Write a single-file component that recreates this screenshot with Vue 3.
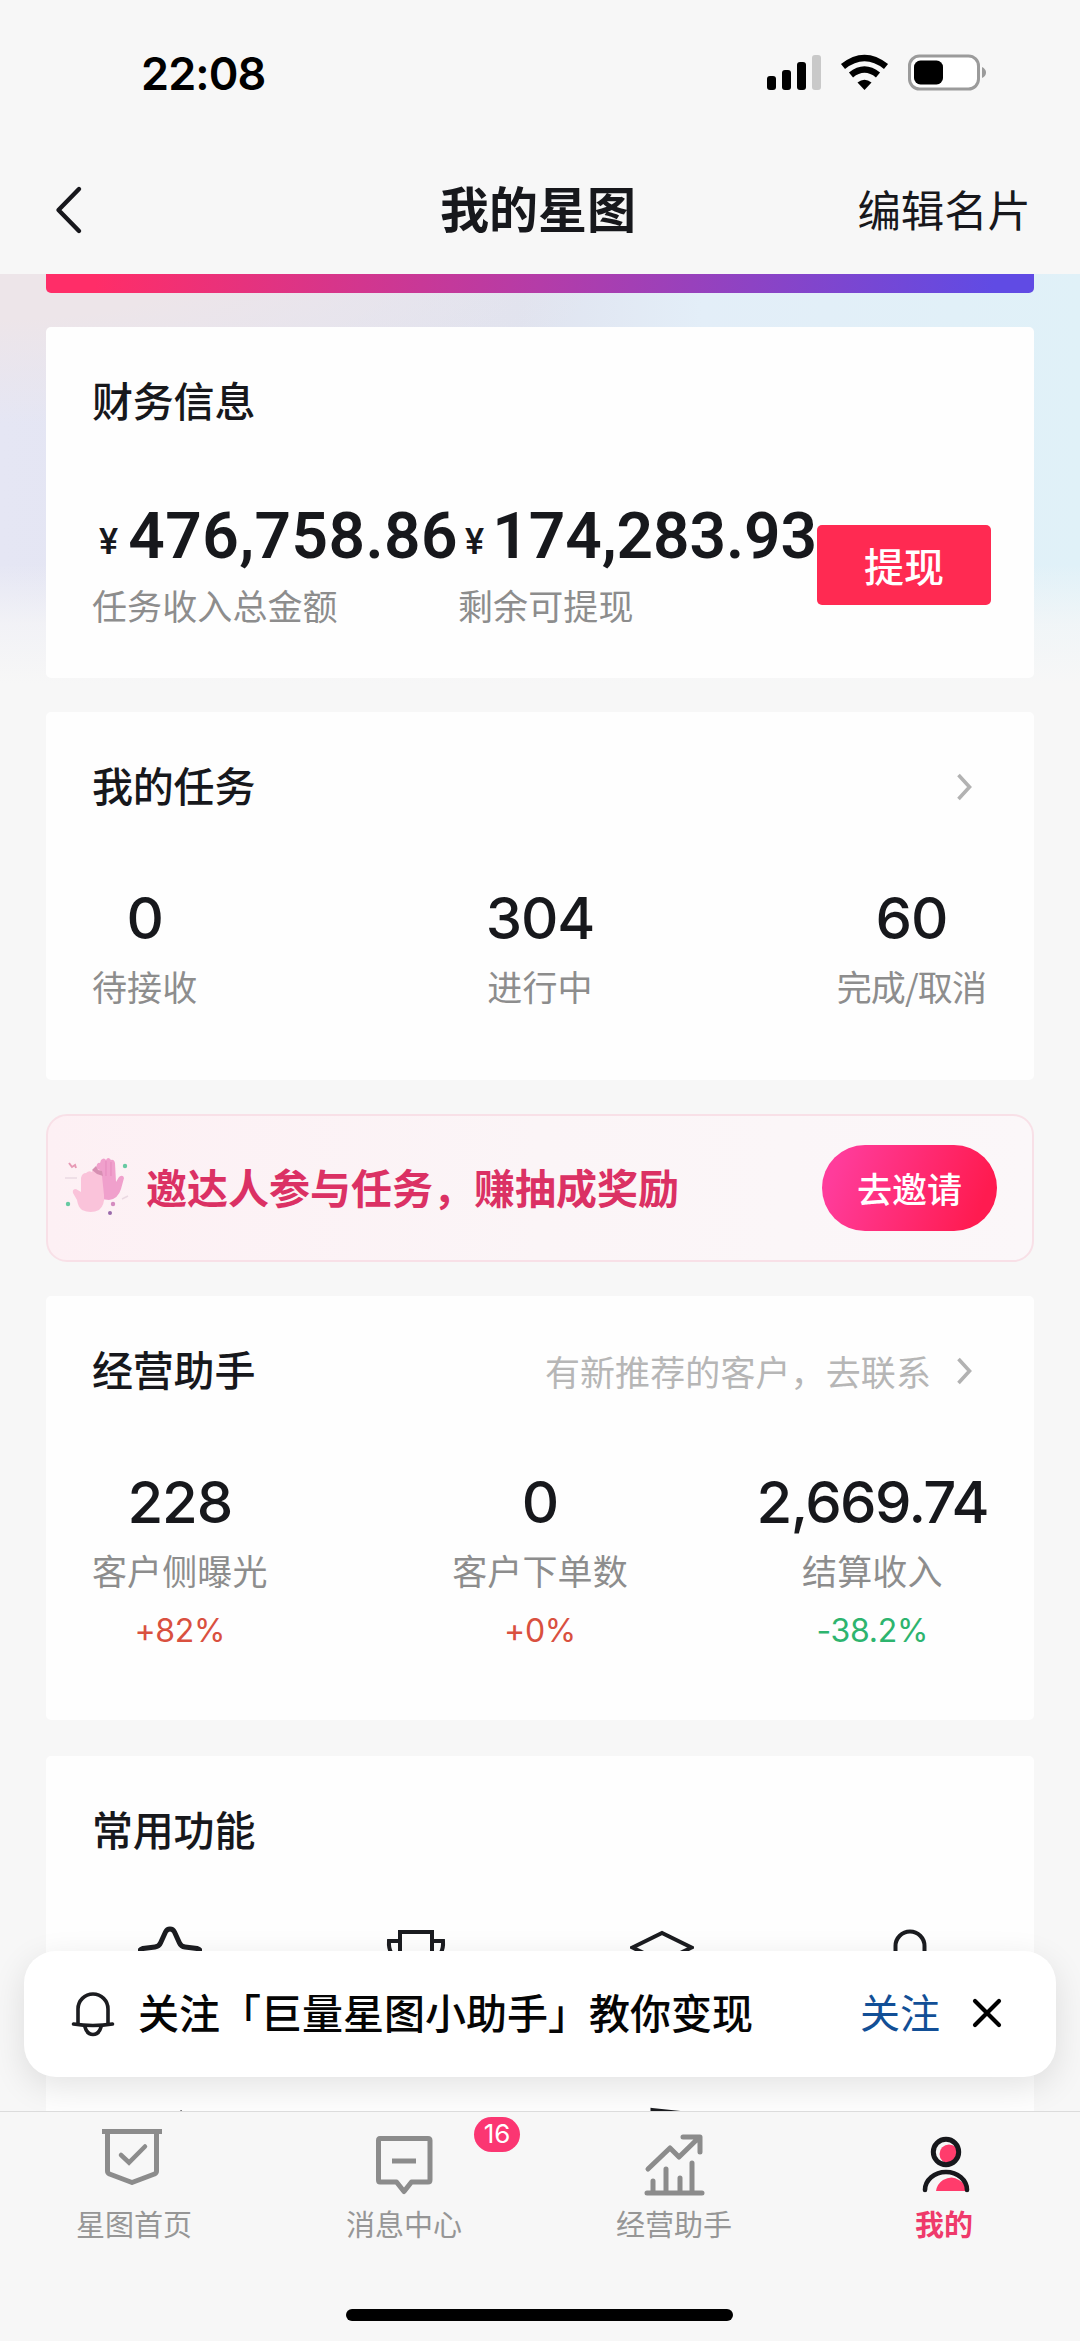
<script setup>
const tasks = [
  { value: '0', label: '待接收' },
  { value: '304', label: '进行中' },
  { value: '60', label: '完成/取消' },
]
const business = [
  { value: '228', label: '客户侧曝光', delta: '+82%', trend: 'rise' },
  { value: '0', label: '客户下单数', delta: '+0%', trend: 'rise' },
  { value: '2,669.74', label: '结算收入', delta: '-38.2%', trend: 'fall' },
]
</script>

<template>
  <div class="page">
    <header class="top">
      <div class="status">
        <span class="time">22:08</span>
        <svg class="status-icons" width="222" height="40" viewBox="0 0 222 40">
          <rect x="0" y="22" width="9" height="14" rx="3" />
          <rect x="15" y="16" width="9" height="20" rx="3" />
          <rect x="30" y="8" width="9" height="28" rx="3" />
          <rect x="45" y="1" width="9" height="35" rx="3" fill="#c9c9c9" />
          <path d="M76 12.500Q97.500 -4.500 119 12.500" fill="none" stroke="#000" stroke-width="6.500" />
          <path d="M84 21Q97.500 10 111 21" fill="none" stroke="#000" stroke-width="6.500" />
          <path d="M90.500 28.500Q97.500 23 104.500 28.500L97.500 36Z" />
          <rect x="142.500" y="2" width="69" height="33" rx="10" fill="#fff" stroke="#9b9b9b" stroke-width="3" />
          <rect x="147" y="6.500" width="29" height="24" rx="6.500" />
          <path d="M215 13Q219 15 219 18.500Q219 22 215 24Z" fill="#9b9b9b" />
        </svg>
      </div>
      <nav class="navbar">
        <svg class="back" width="30" height="50" viewBox="0 0 30 50">
          <path d="M25 4L4.500 25L25 46" fill="none" stroke="#17171c" stroke-width="4.400" stroke-linecap="round" stroke-linejoin="round" />
        </svg>
        <h1>我的星图</h1>
        <span class="edit">编辑名片</span>
      </nav>
    </header>

    <main class="content">
      <div class="strip"></div>

      <section class="card finance">
        <div class="card-head"><h2>财务信息</h2></div>
        <div class="money-row">
          <div class="money first">
            <div class="amount"><small>¥</small><b>476,758.86</b></div>
            <div class="label">任务收入总金额</div>
          </div>
          <div class="money second">
            <div class="amount"><small>¥</small><b>174,283.93</b></div>
            <div class="label">剩余可提现</div>
          </div>
          <button class="withdraw">提现</button>
        </div>
      </section>

      <section class="card tasks">
        <div class="card-head">
          <h2>我的任务</h2>
          <svg class="more" width="16" height="28" viewBox="0 0 16 28"><path d="M2.500 2L13.500 14L2.500 26" /></svg>
        </div>
        <div class="stats">
          <div v-for="t in tasks" :key="t.label" class="stat">
            <div class="value">{{ t.value }}</div>
            <div class="label">{{ t.label }}</div>
          </div>
        </div>
      </section>

      <section class="invite">
        <svg class="hands" width="68" height="64" viewBox="0 0 68 64">
          <path d="M33 12Q34 6 37 7L38 4Q41 1 43 4Q45 0 48 4Q51 3 52 7L53 26L56 21Q60 18 61 22L58 33Q55 43 46 44L38 43Z" fill="#f0a0cc" />
          <path d="M43 5V20M48 6V20" stroke="#e589bd" stroke-width="1" />
          <path d="M18 22Q19 17 23 17Q26 14 29 16Q31 10 35 13Q39 14 39 20L41 39Q42 49 36 54Q28 58 19 54Q15 51 14 44L10 37Q9 33 13 33L18 36Z" fill="#fac3da" />
          <path d="M29 14L33 10L35 14L39 15L40 20L34 18Z" fill="#d68fb2" />
          <path d="M6 7L9 11L12 9L13 12" fill="none" stroke="#e79ab5" stroke-width="2" />
          <path d="M2 22H14M59 43L65 40" stroke="#ead9e2" stroke-width="1.500" />
          <circle cx="62" cy="10" r="2.200" fill="#67c9a2" />
          <circle cx="5" cy="48" r="2.200" fill="#67c9a2" />
          <circle cx="50" cy="48" r="2.200" fill="#d48bc0" />
          <circle cx="47" cy="57" r="2" fill="#9a6bab" />
        </svg>
        <span class="invite-text">邀达人参与任务，赚抽成奖励</span>
        <button class="invite-btn">去邀请</button>
      </section>

      <section class="card business">
        <div class="card-head">
          <h2>经营助手</h2>
          <span class="hint">有新推荐的客户，去联系</span>
          <svg class="more" width="16" height="28" viewBox="0 0 16 28"><path d="M2.500 2L13.500 14L2.500 26" /></svg>
        </div>
        <div class="stats">
          <div v-for="b in business" :key="b.label" class="stat">
            <div class="value">{{ b.value }}</div>
            <div class="label">{{ b.label }}</div>
            <div class="delta" :class="b.trend">{{ b.delta }}</div>
          </div>
        </div>
      </section>

      <section class="card tools">
        <div class="card-head"><h2>常用功能</h2></div>
        <div class="tool-row">
          <svg width="64" height="64" viewBox="0 0 64 64">
            <path d="M32 3Q29 3 27.500 6L22.500 17Q21 20.500 17 21L5 22.500Q0 24 3 27L15 40L12 58L32 50L52 58L49 40L61 27Q64 24 59 22.500L47 21Q43 20.500 41.500 17L36.500 6Q35 3 32 3Z" />
          </svg>
          <svg width="64" height="64" viewBox="0 0 64 64">
            <path d="M16 6H48V34Q48 46 32 46Q16 46 16 34ZM16 15H5Q4 30 16 32M48 15H59Q60 30 48 32M32 46V60M18 60H46" stroke-width="4" />
          </svg>
          <svg width="64" height="64" viewBox="0 0 64 64">
            <path d="M2.500 21.500L32 7L61.500 21.500L32 36ZM14 30V48Q32 60 50 48V30" stroke-width="4" />
          </svg>
          <svg width="64" height="64" viewBox="0 0 64 64">
            <path d="M19.500 30V20A14.500 14.500 0 0 1 48.500 20V30Q46 42 34 42Q22 42 19.500 30Z" stroke-width="4" />
          </svg>
        </div>
        <div class="tool-row next">
          <svg width="64" height="64" viewBox="0 0 64 64"><path d="M43 4.500L60 32L32 60L4 32Z" stroke-width="2" /></svg>
          <i></i>
          <svg width="64" height="64" viewBox="0 0 64 64"><path d="M22 2.500L60 6.500V60H22Z" stroke-width="3" /></svg>
          <i></i>
        </div>
      </section>
    </main>

    <aside class="toast">
      <svg width="44" height="46" viewBox="0 0 44 46" fill="none" stroke="#1b1c20" stroke-width="3.600" stroke-linecap="round">
        <path d="M7 33V18A15 15 0 0 1 37 18V33" />
        <path d="M2.500 33Q22 36 41.500 33" />
        <path d="M14 36Q16 43.500 22 43.500Q28 43.500 30 36" />
      </svg>
      <span class="toast-text">关注「巨量星图小助手」教你变现</span>
      <span class="follow">关注</span>
      <svg class="close" width="30" height="30" viewBox="0 0 30 30"><path d="M3 3L27 27M27 3L3 27" stroke="#000" stroke-width="4.200" stroke-linecap="round" /></svg>
    </aside>

    <footer class="tabs">
      <div class="tab">
        <svg class="raised" width="64" height="64" viewBox="0 0 64 64" fill="none" stroke="#8c8c8c" stroke-width="5">
          <path d="M1 4.500H61" />
          <path d="M6.500 5V44Q6.500 46 8.500 47L31 55.500L53.500 47Q55.500 46 55.500 44V5" stroke-linejoin="round" />
          <path d="M20 28L28 35.500L44 19.500" stroke-width="4.500" stroke-linecap="round" />
        </svg>
        <span>星图首页</span>
      </div>
      <div class="tab">
        <svg width="64" height="64" viewBox="0 0 64 64" fill="none" stroke="#8c8c8c" stroke-width="5" stroke-linejoin="round">
          <path d="M8 5.500H56Q58 5.500 58 7.500V47Q58 49 56 49H39.500L32 58.500L24.500 49H8Q6.500 49 6.500 47V7.500Q6.500 5.500 8 5.500Z" />
          <path d="M20 28H44" />
        </svg>
        <span>消息中心</span>
        <em class="badge">16</em>
      </div>
      <div class="tab">
        <svg width="64" height="64" viewBox="0 0 64 64" fill="none" stroke="#8c8c8c" stroke-width="5" stroke-linecap="round" stroke-linejoin="round">
          <path d="M6 36L28 15L37 24L57 4.500M41 4H58V19" />
          <path d="M5 60H60M11 59V48M24 59V36M38 59V45M50 59V30" />
        </svg>
        <span>经营助手</span>
      </div>
      <div class="tab active">
        <svg width="64" height="64" viewBox="0 0 64 64" fill="none">
          <circle cx="37" cy="21" r="9.500" fill="#ff3c6c" />
          <path d="M24 58Q25 51 31 47Q40 42 47 47Q54 51 55 58Z" fill="#ff3c6c" />
          <circle cx="34" cy="19" r="12.700" stroke="#17181c" stroke-width="5" />
          <path d="M13 57A21 18 0 0 1 55 57" stroke="#17181c" stroke-width="4.600" stroke-linecap="round" />
        </svg>
        <span>我的</span>
      </div>
      <div class="home"></div>
    </footer>
  </div>
</template>

<style>
body { margin: 0; }
</style>

<style scoped>
.page {
  position: relative;
  display: flex;
  flex-direction: column;
  width: 1080px;
  height: 2341px;
  overflow: hidden;
  background: #f7f7f7;
  color: #17181c;
  font-family: "Noto Sans CJK SC", sans-serif;
}
h1, h2 { margin: 0; font-weight: 500; }
button { flex: none; border: 0; padding: 0; color: #fff; font-family: inherit; }
svg { display: block; flex: none; }

.top { flex: none; height: 274px; background: #f7f7f7; }
.status {
  display: flex;
  justify-content: space-between;
  align-items: center;
  height: 146px;
  padding: 0 91px 0 141px;
}
.time { margin-top: 2px; font: 600 45px/50px Inter, sans-serif; color: #000; letter-spacing: -0.9px; }
.status-icons { margin-top: 2px; }
.navbar {
  display: grid;
  grid-template-columns: 1fr auto 1fr;
  align-items: center;
  height: 128px;
  padding: 0 49px 0 54px;
}
h1 { margin: -6px 9px 0 0; font-size: 49px; line-height: 60px; font-weight: 700; }
.edit { justify-self: end; margin-top: -4px; font-size: 43.400px; line-height: 60px; }

.content {
  flex: none;
  height: 1837px;
  overflow: hidden;
  padding: 0 46px;
  background:
    linear-gradient(180deg, rgba(247,247,247,0) 0, rgba(247,247,247,0) 290px, rgba(247,247,247,.7) 350px, #f7f7f7 410px),
    radial-gradient(ellipse 600px 150px at 0 0, #ede5e9 30%, rgba(237,229,233,0) 100%),
    linear-gradient(90deg, #e5e6f4 0, #e0e3ef 48%, #e3eef8 65%, #e0f1f8 100%);
}
.strip {
  height: 19px;
  border-radius: 0 0 5px 5px;
  background: linear-gradient(90deg, #ff2d68 5%, #b43ca8 50%, #604be4 96%);
}
.card {
  margin-top: 34px;
  padding: 45px 46px 0;
  border-radius: 5px;
  background: #fefefe;
  box-sizing: border-box;
}
.finance { height: 351px; }
.tasks { height: 368px; }
.business { height: 424px; }
.tools { height: 500px; margin-top: 36px; }
.card-head { display: flex; align-items: center; height: 60px; }
h2 { flex: 1; margin-top: -6px; font-size: 41px; line-height: 60px; letter-spacing: -0.2px; }
.more { margin-right: 16px; }
.more path { fill: none; stroke: #b2b2b2; stroke-width: 3.600; }
.hint { font-size: 35px; line-height: 60px; color: #b6b6b6; letter-spacing: 0.1px; margin-right: 25px; }

.money-row { display: flex; align-items: flex-start; margin-top: 69px; }
.money.first { flex: none; width: 366px; }
.money.second { flex: none; width: 359px; }
.amount { display: flex; align-items: baseline; height: 76px; margin-top: -2px; white-space: nowrap; font-family: Roboto, sans-serif; line-height: 76px; }
.amount small { position: relative; top: -4px; width: 30px; padding-left: 7px; font-size: 36px; font-weight: 500; }
.second .amount small { width: 28px; }
.amount b { font-size: 64px; font-weight: 600; letter-spacing: 0.4px; }
.second .amount b { letter-spacing: -0.1px; }
.label { font-size: 35px; line-height: 40px; color: #8d8d8d; letter-spacing: 0.1px; white-space: nowrap; }
.money .label { margin-top: 10px; }
.withdraw { width: 174px; height: 80px; margin-top: 24px; border-radius: 5px; background: #ff2a52; font-size: 40px; font-weight: 500; line-height: 74px; }

.stats { display: grid; grid-template-columns: 1fr auto 1fr; margin-top: 65px; }
.stat { display: flex; flex-direction: column; align-items: center; }
.stat:first-child { justify-self: start; }
.stat:last-child { justify-self: end; margin-right: 2px; }
.value { font: 500 58px/72px Inter, sans-serif; letter-spacing: -1.1px; }
.stat .label { margin-top: 12px; }
.tasks .stat:last-child .label { letter-spacing: -0.9px; }
.business .stat:last-child { margin-right: 0; }
.business .stat:last-child .value { letter-spacing: -1.6px; }
.delta { margin-top: 22px; font: 400 32px/38px Inter, sans-serif; letter-spacing: -0.3px; }
.rise { color: #d9503f; }
.fall { color: #2db46e; }

.invite {
  display: flex;
  align-items: center;
  box-sizing: border-box;
  height: 148px;
  margin-top: 34px;
  padding: 0 35px 0 15px;
  border: 2px solid #f8e0e7;
  border-radius: 21px;
  background: linear-gradient(90deg, #fdf0f4 0, #fbf5f7 50%, #fbf7f9 100%);
}
.invite-text { margin: -4px 0 0 15px; font-size: 41px; line-height: 60px; font-weight: 700; color: #db3164; }
.invite-btn {
  width: 175px;
  height: 86px;
  margin-left: auto;
  border-radius: 43px;
  background: linear-gradient(110deg, #ff3c9b 10%, #ff1b50 88%);
  font-size: 35px;
  font-weight: 500;
  line-height: 80px;
}

.tool-row { display: grid; grid-template-columns: repeat(4, 64px); gap: 0 182px; margin: 65px 0 0 46px; }
.tool-row svg { fill: none; stroke: #1b1c20; stroke-width: 5; }
.tool-row.next { margin-top: 117px; }

.toast {
  position: absolute;
  left: 24px;
  top: 1951px;
  display: flex;
  align-items: center;
  box-sizing: border-box;
  width: 1032px;
  height: 126px;
  padding: 0 54px 0 47px;
  border-radius: 32px;
  background: #fff;
  box-shadow: 0 10px 34px rgba(0,0,0,.11);
}
.toast-text { margin: -6px 0 0 23px; font-size: 41px; line-height: 60px; font-weight: 500; color: #050505; white-space: nowrap; }
.follow { margin: -6px 0 0 auto; font-size: 40px; line-height: 60px; color: #124f96; }
.close { margin: -2px 0 0 32px; }

.tabs {
  position: relative;
  flex: 1;
  display: grid;
  grid-template-columns: repeat(4, 270px);
  border-top: 1px solid #dcdcdc;
  background: #f7f7f7;
}
.tab { position: relative; display: flex; flex-direction: column; align-items: center; padding: 21px 2px 0 0; }
.tab span { margin-top: 6px; font-size: 29px; line-height: 40px; color: #969696; }
.tab .raised { margin: -6px 2px 6px 0; }
.tab.active span { color: #ef3a6b; font-weight: 700; }
.badge {
  position: absolute;
  left: 204px;
  top: 5px;
  width: 46px;
  height: 35px;
  border-radius: 18px;
  background: #fb3672;
  color: #fff;
  font: 400 26px/34px Inter, sans-serif;
  text-align: center;
}
.home { position: absolute; left: 346px; bottom: 20px; width: 387px; height: 12px; border-radius: 6px; background: #000; }
</style>
